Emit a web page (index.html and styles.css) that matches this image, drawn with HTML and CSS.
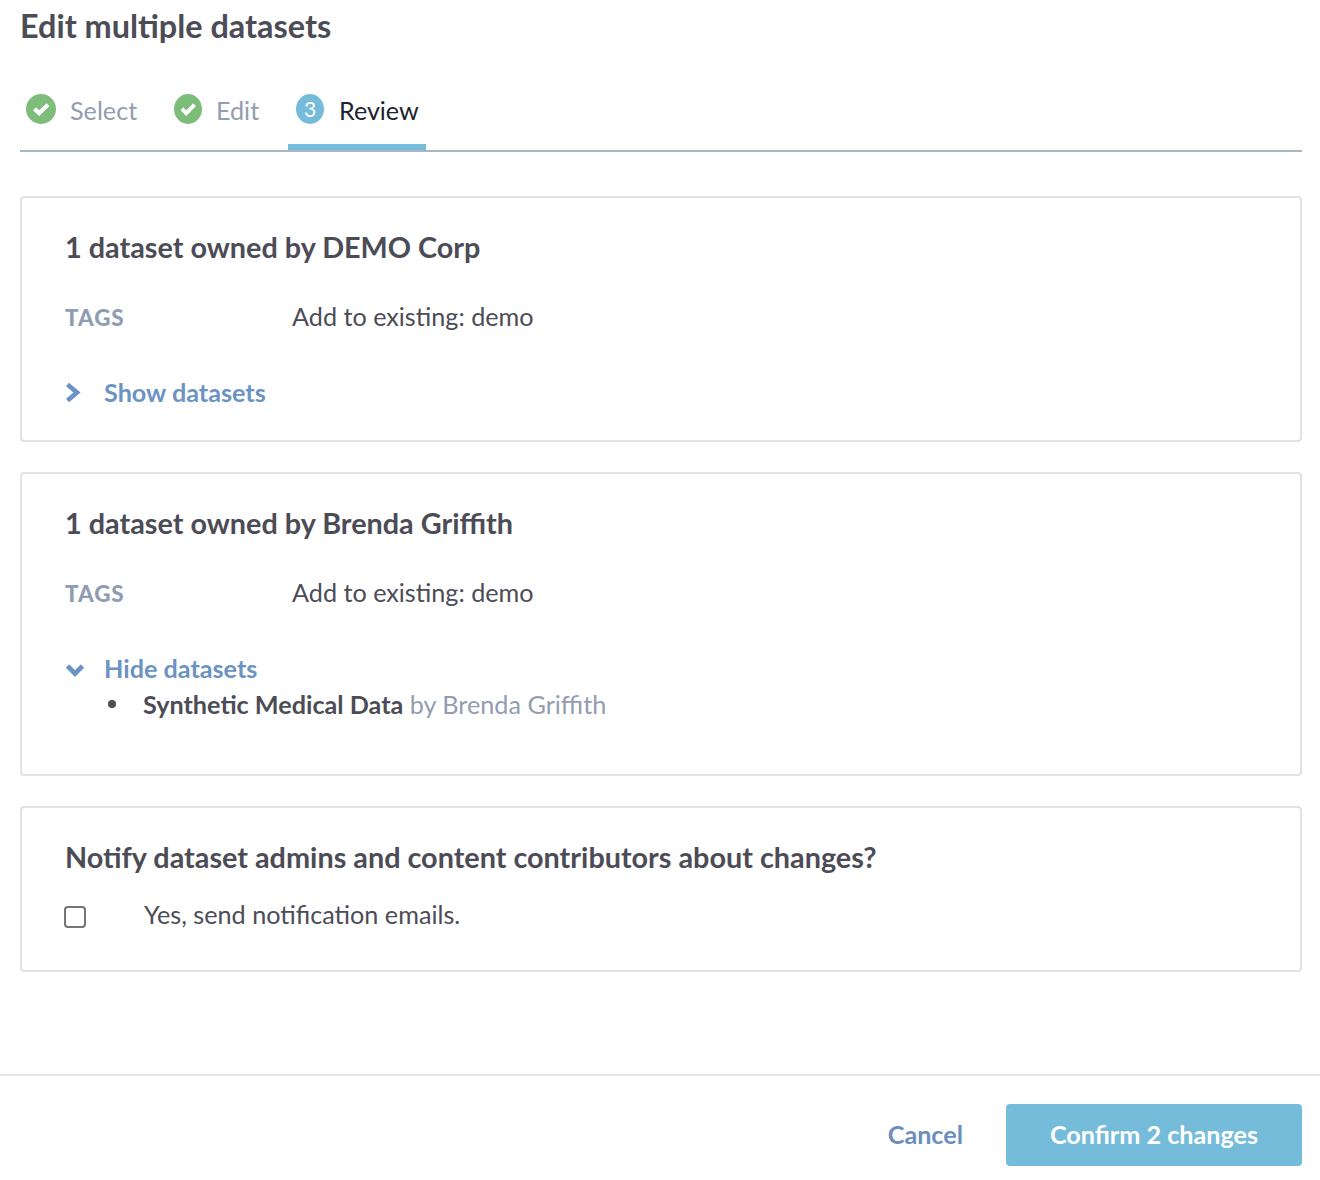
FILE: index.html
```html
<!DOCTYPE html>
<html lang="en">
<head>
<meta charset="utf-8">
<title>Edit multiple datasets</title>
<link rel="stylesheet" href="styles.css">
</head>
<body>
<div class="modal">
  <div class="content">
    <h1 class="title">Edit multiple datasets</h1>
    <div class="steps">
      <div class="step done">
        <svg class="step-icon" viewBox="0 0 30 30" preserveAspectRatio="none"><circle cx="15" cy="15" r="15" fill="#7ebc7a"/><path d="M8.500 14.800l4.600 4.400L22 10.800" fill="none" stroke="#fff" stroke-width="4.200"/></svg>
        <span>Select</span>
      </div>
      <div class="step done">
        <svg class="step-icon step-icon-narrow" viewBox="0 0 30 30" preserveAspectRatio="none"><circle cx="15" cy="15" r="15" fill="#7ebc7a"/><path d="M8.500 14.800l4.600 4.400L22 10.800" fill="none" stroke="#fff" stroke-width="4.200"/></svg>
        <span>Edit</span>
      </div>
      <div class="step active">
        <span class="step-num">3</span>
        <span class="review">Review</span>
      </div>
    </div>

    <section class="card">
      <h2 class="card-title">1 dataset owned by DEMO Corp</h2>
      <div class="row"><span class="label">TAGS</span><span class="value">Add to existing: demo</span></div>
      <div class="toggle">
        <svg class="chev" viewBox="0 0 20 20"><path d="M2.500 2.500l9.500 8-9.500 8" fill="none" stroke="#6b93c3" stroke-width="4.600"/></svg>
        <span>Show datasets</span>
      </div>
    </section>

    <section class="card card-open">
      <h2 class="card-title">1 dataset owned by Brenda Griffith</h2>
      <div class="row"><span class="label">TAGS</span><span class="value">Add to existing: demo</span></div>
      <div class="toggle">
        <svg class="chev" viewBox="0 0 20 20"><path d="M2.500 8l7.500 7.500 7.500-7.500" fill="none" stroke="#6b93c3" stroke-width="4.800"/></svg>
        <span>Hide datasets</span>
      </div>
      <ul class="list">
        <li><span class="item"><strong>Synthetic Medical Data</strong> <span class="by">by Brenda Griffith</span></span></li>
      </ul>
    </section>

    <section class="card card-notify">
      <h2 class="card-title">Notify dataset admins and content contributors about changes?</h2>
      <label class="check"><span class="box"></span><span class="value">Yes, send notification emails.</span></label>
    </section>
  </div>
  <footer class="footer">
    <span class="cancel">Cancel</span>
    <span class="confirm">Confirm 2 changes</span>
  </footer>
</div>
</body>
</html>
```
FILE: styles.css
```css
* { box-sizing: border-box; }
html, body { margin: 0; padding: 0; background: #fff; }
body { font-family: Lato, "Open Sans", sans-serif; color: #4a4a55; height: 1180px; overflow: hidden; }
.modal { display: flex; flex-direction: column; height: 1180px; }
.content { padding: 0 18px 0 20px; height: 1074px; }
.title { margin: 0 0 2px; font-size: 32.4px; line-height: 52px; font-weight: 700; color: #4c4c57; }
.steps { display: flex; height: 98px; padding-top: 31px; border-bottom: 2px solid #aab6c4; margin-bottom: 44px; }
.step { display: flex; align-items: flex-start; font-size: 25.2px; color: #929daf; height: 65px; }
.step span { line-height: 50px; }
.step:nth-child(1) { padding-left: 6px; width: 154px; }
.step:nth-child(2) { width: 114px; }
.step-icon { width: 30px; height: 30px; margin: 9px 14px 0 0; flex: none; }
.step-icon-narrow { width: 28px; margin-right: 14px; }
.step.active { color: #1c2330; width: 138px; padding-left: 8px; border-bottom: 6px solid #75bcda; }
.step .review { font-size: 25.1px; }
.step .step-num { width: 28px; height: 30px; border-radius: 50%; background: #75bcda; color: #fff; font-size: 21px; font-weight: 400; line-height: 29px; text-align: center; margin: 9px 15px 0 0; flex: none; }
.card { border: 2px solid #e2e2e2; border-radius: 4px; padding: 0 43px; height: 246px; margin-bottom: 30px; }
.card-open { height: 304px; }
.card-notify { height: 166px; }
.card-title { margin: 0; padding-top: 30px; font-size: 28.8px; line-height: 38px; font-weight: 700; color: #4c4c57; }
.row { display: flex; align-items: center; margin-top: 31px; height: 38px; }
.label { width: 227px; margin-top: 2px; font-size: 22.4px; font-weight: 900; color: #8f9db2; letter-spacing: 1px; }
.value { font-size: 25.2px; color: #4c4c57; }
.toggle { display: flex; align-items: center; margin-top: 38px; height: 38px; font-size: 25.2px; font-weight: 700; color: #6b93c3; }
.chev { width: 20px; height: 20px; margin: 0 19px 0 0; flex: none; }
.list { margin: 0; padding: 0; list-style: none; font-size: 25.2px; line-height: 34px; }
.list li { display: flex; align-items: center; color: #4c4c57; }
.list li::before { content: ""; width: 8px; height: 8px; border-radius: 50%; background: #4c4c57; margin: 0 27px 0 43px; flex: none; }
.list strong { font-weight: 700; }
.by { color: #929daf; }
.check { display: flex; align-items: center; margin-top: 19px; height: 38px; }
.box { width: 22px; height: 22px; border: 2px solid #757575; border-radius: 4px; margin: 6px 58px 0 -1px; flex: none; background: #fff; }
.footer { display: flex; justify-content: flex-end; align-items: center; border-top: 2px solid #e2e6ea; height: 106px; padding: 28px 18px 14px 0; }
.cancel { font-size: 25.2px; line-height: 30px; padding-bottom: 2px; font-weight: 700; color: #6b8ebe; margin-right: 43px; }
.confirm { display: flex; align-items: center; justify-content: center; width: 296px; height: 62px; padding-bottom: 2px; background: #75bcda; border-radius: 4px; color: #fff; font-size: 25.2px; font-weight: 700; }
```
